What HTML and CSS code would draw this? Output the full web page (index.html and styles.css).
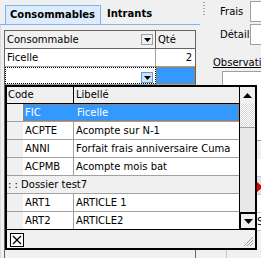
FILE: index.html
```html
<!DOCTYPE html>
<html>
<head>
<meta charset="utf-8">
<link rel="stylesheet" href="styles.css">
</head>
<body>
<div class="page">
  <div class="left">
    <div class="tabbar">
      <div class="tab active">Consommables</div>
      <div class="tab">Intrants</div>
    </div>
    <div class="panel">
      <div class="grid">
        <div class="grow ghead">
          <div class="gc c1">Consommable<span class="dd"><svg width="7" height="4" viewBox="0 0 7 4"><path d="M0 0H7L3.5 4Z" fill="#000"/></svg></span></div>
          <div class="gc c2">Qté</div>
        </div>
        <div class="grow">
          <div class="gc c1">Ficelle</div>
          <div class="gc c2 num">2</div>
        </div>
        <div class="grow">
          <div class="gc c1 focus"><span class="dd hot"><svg width="7" height="4" viewBox="0 0 7 4"><path d="M0 0H7L3.5 4Z" fill="#000"/></svg></span></div>
          <div class="gc c2 cursel"></div>
        </div>
        <div class="grow fill"></div>
      </div>
    </div>
  </div>
  <div class="splitter"></div>
  <div class="right">
    <div class="field"><span class="lbl">Frais</span><span class="input"></span></div>
    <div class="field"><span class="lbl">Détail</span><span class="input"></span></div>
    <div class="obs">Observations</div>
    <div class="textarea"></div>
    <div class="subgrid">
      <div class="sg-row"></div>
      <div class="sg-row mark"><svg width="6" height="10" viewBox="0 0 6 10"><path d="M0 0L6 5L0 10Z" fill="#e00000"/></svg></div>
      <div class="sg-row"></div>
      <div class="sg-row s">S</div>
      <div class="sg-row rest"></div>
    </div>
  </div>
</div>

<div class="popup">
  <div class="pop-main">
    <div class="list">
      <div class="phead">
        <div class="pc code">Code</div>
        <div class="pc lib">Libellé</div>
      </div>
      <div class="prow selected">
        <div class="ind"></div>
        <div class="selbox">
          <div class="pc code">FIC</div>
          <div class="pc lib">Ficelle</div>
        </div>
      </div>
      <div class="prow">
        <div class="ind"></div>
        <div class="pc code">ACPTE</div>
        <div class="pc lib">Acompte sur N-1</div>
      </div>
      <div class="prow">
        <div class="ind"></div>
        <div class="pc code">ANNI</div>
        <div class="pc lib">Forfait frais anniversaire Cuma</div>
      </div>
      <div class="prow">
        <div class="ind"></div>
        <div class="pc code">ACPMB</div>
        <div class="pc lib">Acompte mois bat</div>
      </div>
      <div class="prow group">: : Dossier test7</div>
      <div class="prow">
        <div class="ind"></div>
        <div class="pc code">ART1</div>
        <div class="pc lib">ARTICLE 1</div>
      </div>
      <div class="prow last">
        <div class="ind"></div>
        <div class="pc code">ART2</div>
        <div class="pc lib">ARTICLE2</div>
      </div>
    </div>
    <div class="vscroll">
      <div class="sbtn up"><svg width="9" height="5" viewBox="0 0 9 5"><path d="M0 5H9L4.5 0Z" fill="#000"/></svg></div>
      <div class="track"></div>
      <div class="thumb"></div>
      <div class="sbtn down"><svg width="9" height="5" viewBox="0 0 9 5"><path d="M0 0H9L4.5 5Z" fill="#000"/></svg></div>
    </div>
  </div>
  <div class="pop-foot">
    <div class="xbtn"><svg width="10" height="10" viewBox="0 0 10 10"><path d="M1 1L9 9M9 1L1 9" stroke="#000" stroke-width="1.3"/></svg></div>
    <div class="grip"><svg width="11" height="11" viewBox="0 0 11 11"><path d="M10 1L1 10M10 4L4 10M10 7L7 10" stroke="#a0a0a0" stroke-width="1"/></svg></div>
  </div>
</div>
</body>
</html>
```

FILE: styles.css
```css
* { box-sizing: border-box; }
html, body { margin: 0; padding: 0; }
body {
  width: 261px;
  height: 258px;
  overflow: hidden;
  background: #f0f0f0;
  font-family: "DejaVu Sans", sans-serif;
  font-size: 10px;
  color: #000;
  position: relative;
}
.page {
  display: flex;
  height: 258px;
  overflow: hidden;
}
.left {
  width: 200px;
  flex-shrink: 0;
  display: flex;
  flex-direction: column;
}
.tabbar {
  height: 25px;
  padding: 5px 0 0 5px;
  display: flex;
  align-items: flex-end;
  border-bottom: 1px solid #7eb4ea;
}
.tab {
  height: 19px;
  padding: 3px 5px 0 6px;
  font-weight: bold;
  font-size: 10px;
}
.tab.active {
  width: 96px;
  background: #dcecfc;
  border: 1px solid #7eb4ea;
  border-bottom: none;
  padding-left: 4px;
}
.panel {
  flex: 1;
  padding: 5px 4px 0 4px;
  border-left: 1px solid #dcdcdc;
  display: flex;
  flex-direction: column;
}
.grid {
  flex: 1;
  width: 192px;
  margin-left: -1px;
  border: 1px solid #646464;
  border-bottom: none;
  background: #fff;
  display: flex;
  flex-direction: column;
}
.grow {
  display: flex;
  height: 18px;
  border-bottom: 1px solid #a0a0a0;
}
.grow.fill { flex: 1; border-bottom: none; background: #f0f0f0; }
.ghead { background: #f0f0f0; border-bottom-color: #646464; }
.gc {
  height: 17px;
  line-height: 17px;
  padding-left: 2px;
  position: relative;
  white-space: nowrap;
}
.c1 { width: 151px; border-right: 1px solid #a0a0a0; }
.ghead .c1 { border-right-color: #646464; }
.c2 { flex: 1; }
.num { text-align: right; padding-right: 3px; }
.dd {
  position: absolute;
  right: 2px;
  top: 3px;
  width: 12px;
  height: 11px;
  border: 1px solid #a0a0a0;
  background: #f0f0f0;
  display: flex;
  align-items: center;
  justify-content: center;
}
.dd.hot { background: #cce4f7; border-color: #569de5; top: 4px; }
.focus { border: 1px dotted #000; }
.cursel {
  background: #3399ff;
  border: 1px dotted #e07000;
}
.splitter {
  width: 12px;
  flex-shrink: 0;
  position: relative;
}
.splitter::before {
  content: "";
  position: absolute;
  left: 3px;
  top: 2px;
  width: 2px;
  height: 13px;
  background: repeating-linear-gradient(#a8a8a8 0 1px, transparent 1px 3px);
}
.right {
  flex: 1;
  min-width: 0;
  overflow: hidden;
  display: flex;
  flex-direction: column;
  white-space: nowrap;
}
.field {
  display: flex;
  align-items: center;
  height: 22px;
  margin-bottom: 1px;
}
.lbl { width: 38px; flex-shrink: 0; padding-left: 8px; }
.input {
  flex: 1;
  height: 21px;
  background: #fff;
  border: 1px solid #a0a0a0;
  border-right: none;
}
.obs {
  margin-top: 11px;
  padding-left: 1px;
  text-decoration: underline;
  height: 13px;
  overflow: hidden;
}
.textarea {
  margin-top: 1px;
  margin-left: 10px;
  height: 70px;
  background: #fff;
  border: 1px solid #a0a0a0;
  border-right: none;
}
.subgrid {
  flex: 1;
  margin-top: 18px;
  margin-left: 14px;
  display: flex;
  flex-direction: column;
  border-left: 1px solid #c8c8c8;
}
.sg-row {
  height: 18px;
  border-bottom: 1px solid #c8c8c8;
  background: #fff;
  overflow: hidden;
}
.sg-row.mark { background: #e4e4e4; padding: 5px 0 0 30px; }
.sg-row.s { padding-left: 30px; line-height: 17px; }
.sg-row.rest { flex: 1; background: #f0f0f0; border-bottom: none; }

/* popup */
.popup {
  position: absolute;
  left: 5px;
  top: 85px;
  width: 252px;
  height: 165px;
  border: 2px solid #000;
  background: #f0f0f0;
  display: flex;
  flex-direction: column;
}
.pop-main {
  display: flex;
  height: 143px;
}
.list {
  width: 232px;
  display: flex;
  flex-direction: column;
  background: #fff;
}
.phead {
  display: flex;
  height: 17px;
  background: #f0f0f0;
  border-bottom: 1px solid #000;
}
.pc {
  height: 17px;
  line-height: 17px;
  padding-left: 2px;
  white-space: nowrap;
  overflow: hidden;
}
.phead .pc { height: 16px; line-height: 16px; }
.phead .code { width: 67px; padding-left: 1px; border-right: 1px solid #000; }
.phead .lib { flex: 1; }
.prow {
  display: flex;
  height: 18px;
  border-bottom: 1px solid #a0a0a0;
}
.prow.last { border-bottom-color: #000; }
.ind {
  width: 16px;
  height: 17px;
  background: #f0f0f0;
}
.prow .code { width: 51px; border-right: 1px solid #a0a0a0; }
.prow .lib { flex: 1; }
.selbox {
  flex: 1;
  display: flex;
  background: #3399ff;
  color: #fff;
  border: 1px dotted #e07000;
  height: 17px;
}
.selbox .pc { height: 15px; line-height: 15px; }
.selbox .code { width: 50px; padding-left: 1px; border-right: none; }
.selbox .lib { padding-left: 3px; }
.prow.group {
  background: #f0f0f0;
  line-height: 17px;
  padding-left: 1px;
}
.vscroll {
  width: 16px;
  display: flex;
  flex-direction: column;
  border-left: 1px solid #000;
}
.sbtn {
  display: flex;
  align-items: center;
  justify-content: center;
  background: #f0f0f0;
}
.sbtn.up { height: 16px; }
.sbtn.down {
  height: 18px;
  border: 2px solid #000;
  border-right: none;
  margin-left: -1px;
}
.track {
  height: 24px;
  background: repeating-conic-gradient(#ffffff 0 25%, #d8d8d8 0 50%) 0 0 / 2px 2px;
}
.thumb {
  flex: 1;
  background: #e8e8e8;
  border-top: 1px solid #a0a0a0;
}
.pop-foot {
  flex: 1;
  display: flex;
  align-items: flex-start;
  justify-content: space-between;
  padding: 3px 0 0 3px;
}
.xbtn {
  width: 14px;
  height: 14px;
  border: 1px solid #000;
  background: #fff;
  display: flex;
  align-items: center;
  justify-content: center;
}
.grip {
  align-self: flex-end;
  width: 11px;
  height: 11px;
  margin: 0 1px 1px 0;
}
```
